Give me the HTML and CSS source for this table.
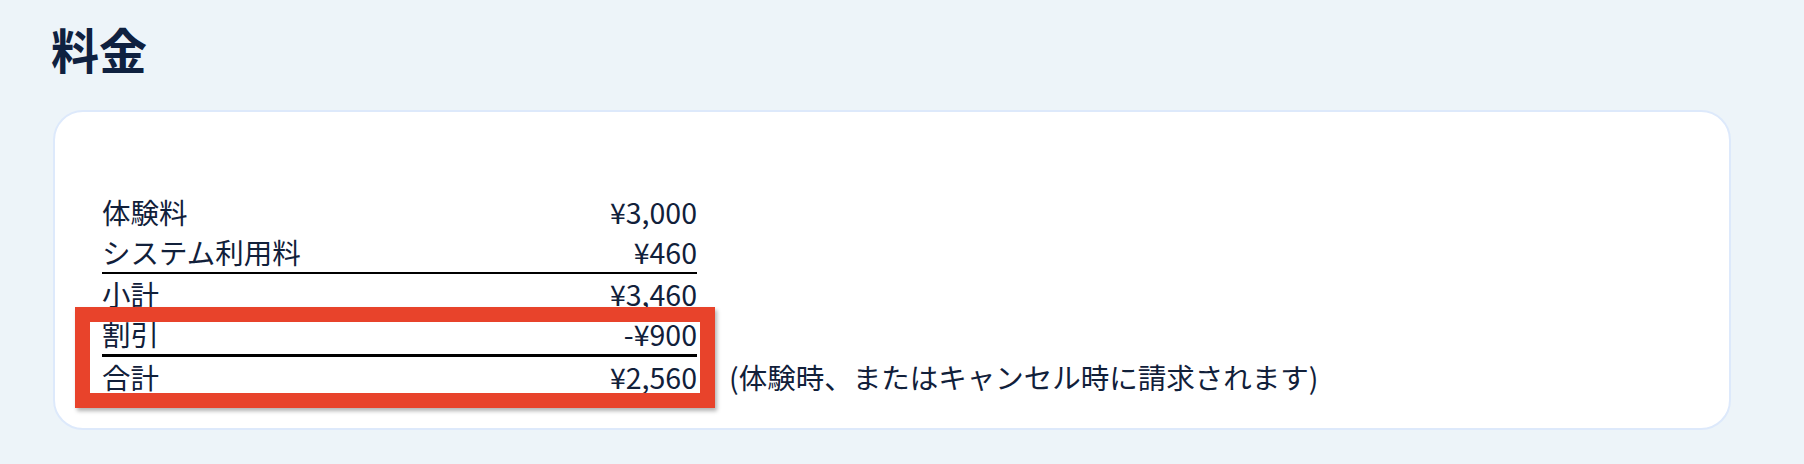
FILE: index.html
```html
<!DOCTYPE html>
<html lang="ja">
<head>
<meta charset="utf-8">
<title>料金</title>
<link rel="stylesheet" href="styles.css">
</head>
<body>
<main class="page">
  <h1 class="title">料金</h1>
  <section class="card">
    <div class="fee-area">
      <div class="fee-table">
        <div class="row"><span>体験料</span><span>¥3,000</span></div>
        <div class="row rule-thin"><span>システム利用料</span><span>¥460</span></div>
        <div class="row"><span>小計</span><span>¥3,460</span></div>
        <div class="row rule-thick"><span>割引</span><span>-¥900</span></div>
        <div class="row"><span>合計</span><span>¥2,560</span></div>
        <div class="highlight"></div>
      </div>
      <p class="note">(体験時、またはキャンセル時に請求されます)</p>
    </div>
  </section>
</main>
</body>
</html>
```

FILE: styles.css
```css
* { box-sizing: border-box; }

html, body {
  margin: 0;
  padding: 0;
}

body {
  background: #edf4f9;
  color: #11203a;
  font-family: "Noto Sans CJK JP", "Noto Sans", sans-serif;
  width: 1804px;
  height: 464px;
  overflow: hidden;
}

.page {
  padding: 20px 73px 0 53px;
}

.title {
  margin: 0 0 34px -2px;
  font-size: 48px;
  line-height: 56px;
  font-weight: 700;
  color: #0f2140;
}

.card {
  background: #ffffff;
  border: 2px solid #dde9fb;
  border-radius: 30px;
  padding: 80px 47px 31px 47px;
}

.fee-area {
  display: flex;
  align-items: flex-end;
  gap: 32px;
}

.fee-table {
  position: relative;
  width: 595px;
}

.row {
  display: flex;
  justify-content: space-between;
  font-size: 28.5px;
  line-height: 40px;
  height: 40px;
}

.rule-thin {
  border-bottom: 2px solid #000;
  height: 42px;
}

.rule-thick {
  border-bottom: 3px solid #000;
  height: 43px;
}

.note {
  margin: 0;
  font-size: 28.5px;
  line-height: 40px;
}

.highlight {
  position: absolute;
  left: -27px;
  top: 115px;
  width: 640px;
  height: 101px;
  border: 15px solid #e8432b;
  box-shadow: 2px 3px 4px rgba(0, 0, 0, 0.3);
}
```
